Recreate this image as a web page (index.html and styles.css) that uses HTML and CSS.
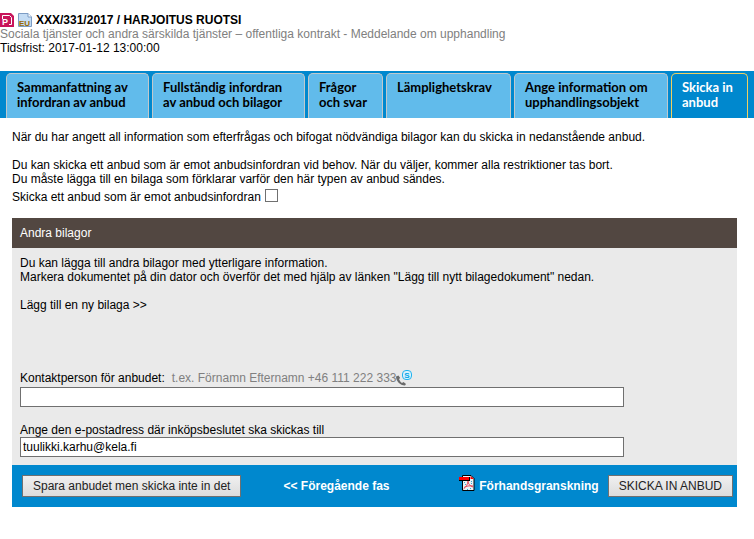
FILE: index.html
```html
<!DOCTYPE html>
<html lang="sv">
<head>
  <meta charset="UTF-8">
  <meta name="viewport" content="width=device-width, initial-scale=1">
  <title>Skicka in anbud</title>
  <link rel="stylesheet" href="styles.css">
</head>
<body>

  <header class="page-head">
    <h1>
      <svg class="icon" viewBox="0 0 14 14" aria-hidden="true">
        <path d="M0 0h11l3 3v11H0z" fill="#c8145a"/>
        <path d="M2.500 6V2.500h7l2 2v7H9" fill="none" stroke="#fff"/>
        <text x="2" y="12" class="icon-p">P</text>
      </svg>
      <svg class="icon" viewBox="0 0 14 14" aria-hidden="true">
        <path d="M.5.500h9.500l3.500 3.500v9.500H.5z" fill="#c4dcf4" stroke="#7c9cc4"/>
        <path d="M10 .5V4h3.500" fill="#fff" stroke="#7c9cc4"/>
        <text x="1" y="12.500" class="icon-eu">EU</text>
      </svg>
      XXX/331/2017 / HARJOITUS RUOTSI
    </h1>
    <p class="subject">Sociala tjänster och andra särskilda tjänster – offentliga kontrakt - Meddelande om upphandling</p>
    <p>Tidsfrist: 2017-01-12 13:00:00</p>
  </header>

  <nav class="tabs">
    <a href="#">Sammanfattning av<br>infordran av anbud</a>
    <a href="#">Fullständig infordran<br>av anbud och bilagor</a>
    <a href="#">Frågor<br>och svar</a>
    <a href="#">Lämplighetskrav</a>
    <a href="#">Ange information om<br>upphandlingsobjekt</a>
    <a href="#" class="active">Skicka in<br>anbud</a>
  </nav>

  <main>
    <p>När du har angett all information som efterfrågas och bifogat nödvändiga bilagor kan du skicka in nedanstående anbud.</p>
    <p class="block">Du kan skicka ett anbud som är emot anbudsinfordran vid behov. När du väljer, kommer alla restriktioner tas bort.<br>
    Du måste lägga till en bilaga som förklarar varför den här typen av anbud sändes.</p>
    <div class="check">
      <label for="against">Skicka ett anbud som är emot anbudsinfordran</label>
      <input type="checkbox" id="against">
    </div>

    <form class="panel">
      <h2>Andra bilagor</h2>
      <div class="panel-body">
        <p>Du kan lägga till andra bilagor med ytterligare information.<br>
        Markera dokumentet på din dator och överför det med hjälp av länken "Lägg till nytt bilagedokument" nedan.</p>
        <p class="block"><a href="#">Lägg till en ny bilaga &gt;&gt;</a></p>

        <div class="field contact">
          <div class="field-head">
            <label for="contact">Kontaktperson för anbudet:</label>
            <span class="hint">t.ex. Förnamn Efternamn +46 111 222 333</span>
            <svg class="call" viewBox="0 0 16 16" aria-hidden="true">
              <path d="M0 6.500C0 11 4 15.500 9 15.500l1-1.500-2.500-2-1.500 1C4.500 12 3.500 10.500 3 9l1.200-1L2.500 5.500z" fill="#6b6b6b"/>
              <rect x="6.500" y=".5" width="9" height="9" rx="3.500" fill="#d9f2fd" stroke="#20b2ee"/>
              <text x="11" y="8" class="icon-s">S</text>
            </svg>
          </div>
          <input type="text" id="contact">
        </div>

        <div class="field">
          <label for="email">Ange den e-postadress där inköpsbeslutet ska skickas till</label>
          <input type="text" id="email" value="tuulikki.karhu@kela.fi">
        </div>
      </div>

      <div class="actions">
        <button type="button">Spara anbudet men skicka inte in det</button>
        <a href="#" class="back">&lt;&lt; Föregående fas</a>
        <a href="#" class="preview">
          <svg class="pdf" viewBox="0 0 16 16" aria-hidden="true">
            <path d="M3.500.500h8.500l3 3v12H3.500z" fill="#e8f4f8" stroke="#000"/>
            <path d="M11.500 1v3H15z" fill="#f00"/>
            <path d="M9 6c0 3 2 5 5 6M9 6c0 3-2 6-4.500 8M5 12.500c2.500-1.500 5-2 9-1.500" fill="none" stroke="#e8485a"/>
            <path d="M5 7.500h1M12 6.500h1M6 9.500h1M12 8.500h1M8 14.500h1M11 13.500h1" stroke="#3aa5d0"/>
            <path d="M0 2h11v4H0z" fill="#000"/>
            <path d="M0 2h10v3H0z" fill="#f00"/>
          </svg>
          Förhandsgranskning
        </a>
        <button type="submit">SKICKA IN ANBUD</button>
      </div>
    </form>
  </main>

</body>
</html>
```

FILE: styles.css
```css
:root {
  --blue: #0088ce;
  --tab: #61bbeb;
  --brown: #524741;
  --panel: #eaeaea;
  --line: #707070;
}

* {
  box-sizing: border-box;
}

body {
  margin: 0;
  padding-top: 12px;
  background: #fff;
  color: #000;
  font-family: Arial, "Liberation Sans", sans-serif;
  font-size: 12px;
  line-height: 14px;
}

h1, h2, p {
  margin: 0;
}

a {
  color: inherit;
  text-decoration: none;
}

.page-head h1 {
  display: flex;
  align-items: center;
  gap: 4px;
  height: 15px;
  font-size: 12px;
}

.icon {
  width: 14px;
  height: 14px;
}

.icon-p {
  fill: #fff;
  font: bold 9px "Liberation Sans", sans-serif;
}

.icon-eu {
  fill: #9a6a00;
  font: bold 8px "Liberation Sans", sans-serif;
}

.icon-s {
  fill: #00a4e8;
  font: bold 8px "Liberation Sans", sans-serif;
  text-anchor: middle;
}

.subject,
.hint {
  color: #808080;
}

.tabs {
  display: grid;
  grid-template-columns: 143fr 153fr 75fr 125fr 154fr 77fr;
  gap: 3px;
  height: 47px;
  margin-top: 16px;
  padding: 2px 6px 0;
  background: var(--blue);
  font-family: "Trebuchet MS", Lato, sans-serif;
  font-size: 13px;
  font-weight: bold;
  line-height: 15px;
}

.tabs a {
  padding: 6px 10px 0;
  border: 1px solid #c0c8cc;
  border-bottom: 0;
  border-radius: 5px 5px 0 0;
  background: var(--tab);
  white-space: nowrap;
}

.tabs .active {
  border-color: #f0d060;
  background: var(--blue);
  color: #fff;
}

main {
  padding: 12px 17px 0 12px;
}

.block {
  margin-top: 14px;
}

.check {
  display: flex;
  align-items: center;
  gap: 4px;
  margin-top: 3px;
}

.check input {
  appearance: none;
  width: 13px;
  height: 13px;
  margin: 0 0 3px;
  border: 1px solid var(--line);
  background: #fff;
}

.panel {
  margin-top: 13px;
  background: var(--panel);
}

.panel h2 {
  padding: 8px;
  background: var(--brown);
  color: #fff;
  font-size: 12px;
  font-weight: normal;
}

.panel-body {
  padding: 8px;
}

.field {
  max-width: 604px;
  margin-top: 16px;
}

.field.contact {
  margin-top: 58px;
}

.field label {
  display: block;
}

.field-head {
  display: flex;
  align-items: center;
  margin-bottom: 1px;
}

.hint {
  margin-left: 7px;
}

.call {
  width: 16px;
  height: 16px;
}

.field input {
  display: block;
  width: 100%;
  height: 20px;
  padding: 0 2px;
  border: 1px solid var(--line);
  background: #fff;
  font: inherit;
}

.actions {
  display: flex;
  align-items: center;
  height: 42px;
  padding: 0 4px 0 10px;
  background: var(--blue);
  color: #fff;
  font-weight: bold;
}

.back {
  margin: 0 auto 0 42px;
}

.preview {
  display: flex;
  align-items: center;
  gap: 4px;
  margin-right: 9px;
}

.pdf {
  width: 16px;
  height: 16px;
  margin-bottom: 6px;
}

button {
  height: 22px;
  padding: 0 10px;
  border: 1px solid var(--line);
  background: linear-gradient(#f0f0f0, #dcdcdc);
  color: #222;
  font: 12px Arial, "Liberation Sans", sans-serif;
}
```
